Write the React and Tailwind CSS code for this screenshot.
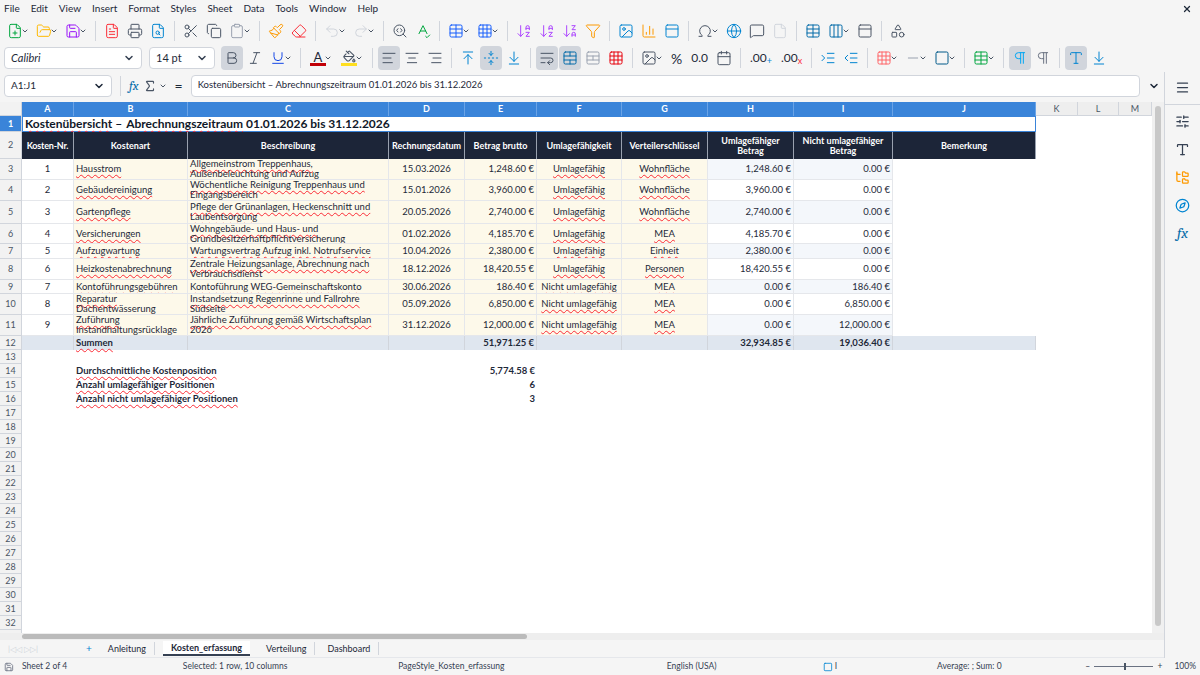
import React from "react";
import {
  FilePlus, FolderOpen, Save, FileText, Printer, FileSearch, Scissors, Copy, Clipboard, Paintbrush, Eraser,
  Undo2, Redo2, SearchCode, SpellCheck, Table, Grid3x3, ArrowDownAZ, ArrowDownZA, Filter, Image, BarChart3,
  Omega, Globe, MessageSquare, File, Columns3, PanelTop, Shapes, ChevronDown, AlignLeft, AlignCenter, AlignRight,
  ArrowUpToLine, FoldVertical, ArrowDownToLine, WrapText, TableCellsMerge, TableCellsSplit, Calendar,
  IndentIncrease, IndentDecrease, Square, Minus, PaintBucket, Pilcrow, Menu, SlidersHorizontal, Type, FolderTree,
  Compass, Sigma, X, Bold, Italic, Underline
} from "lucide-react";

const F = { fontFamily: "Lato, 'Open Sans', sans-serif" };
const cols = [52, 114, 201, 76, 72, 85, 86, 86, 99, 143, 42, 41, 33];
const letters = ["A","B","C","D","E","F","G","H","I","J","K","L","M"];

const rows = [
  ["1","Hausstrom","Allgemeinstrom Treppenhaus, Außenbeleuchtung und Aufzug","15.03.2026","1,248.60 €","Umlagefähig","Wohnfläche","1,248.60 €","0.00 €",21],
  ["2","Gebäudereinigung","Wöchentliche Reinigung Treppenhaus und Eingangsbereich","15.01.2026","3,960.00 €","Umlagefähig","Wohnfläche","3,960.00 €","0.00 €",21],
  ["3","Gartenpflege","Pflege der Grünanlagen, Heckenschnitt und Laubentsorgung","20.05.2026","2,740.00 €","Umlagefähig","Wohnfläche","2,740.00 €","0.00 €",23],
  ["4","Versicherungen","Wohngebäude- und Haus- und Grundbesitzerhaftpflichtversicherung","01.02.2026","4,185.70 €","Umlagefähig","MEA","4,185.70 €","0.00 €",20],
  ["5","Aufzugwartung","Wartungsvertrag Aufzug inkl. Notrufservice","10.04.2026","2,380.00 €","Umlagefähig","Einheit","2,380.00 €","0.00 €",15],
  ["6","Heizkostenabrechnung","Zentrale Heizungsanlage, Abrechnung nach Verbrauchsdienst","18.12.2026","18,420.55 €","Umlagefähig","Personen","18,420.55 €","0.00 €",21],
  ["7","Kontoführungsgebühren","Kontoführung WEG-Gemeinschaftskonto","30.06.2026","186.40 €","Nicht umlagefähig","MEA","0.00 €","186.40 €",14],
  ["8","Reparatur Dachentwässerung","Instandsetzung Regenrinne und Fallrohre Südseite","05.09.2026","6,850.00 €","Nicht umlagefähig","MEA","0.00 €","6,850.00 €",21],
  ["9","Zuführung Instandhaltungsrücklage","Jährliche Zuführung gemäß Wirtschaftsplan 2026","31.12.2026","12,000.00 €","Nicht umlagefähig","MEA","0.00 €","12,000.00 €",21],
];

const sp = "underline decoration-wavy decoration-red-500 decoration-[1px] underline-offset-2";

function Dd() { return <ChevronDown size={8} strokeWidth={3} className="text-gray-600 -ml-0.5" />; }
function I({ c: C, col = "text-gray-600", dd, bg }) {
  return (
    <div className={`flex items-center h-6 px-[3px] rounded ${bg ? "bg-gray-300" : ""}`}>
      <C size={16} strokeWidth={1.5} className={col} />
      {dd && <Dd />}
    </div>
  );
}
function Sep() { return <div className="w-px h-5 bg-gray-300 mx-1" />; }

function RowHead({ n, h, sel }) {
  return (
    <div style={{ height: h }} className={`w-[22px] shrink-0 flex items-center justify-center border-b border-r border-gray-300 text-[9px] ${sel ? "bg-[#3a84d9] text-white font-bold" : "bg-[#f2f2f2] text-gray-600"}`}>{n}</div>
  );
}

function Cell({ w, children, cls = "" }) {
  return <div style={{ width: w }} className={`shrink-0 overflow-hidden border-r border-b border-gray-200 flex items-center text-[9.5px] leading-[10px] text-gray-800 ${cls}`}>{children}</div>;
}

export default function App() {
  const empty = [];
  for (let r = 13; r <= 33; r++) empty.push(r);
  return (
    <div style={F} className="w-[1200px] h-[675px] bg-[#f5f5f5] flex flex-col overflow-hidden text-gray-800">
      <div className="h-[17px] flex items-center text-[10px] px-1 gap-[11px] text-gray-800 relative">
        {["File","Edit","View","Insert","Format","Styles","Sheet","Data","Tools","Window","Help"].map(m => <span key={m}>{m}</span>)}
        <X size={10} className="absolute right-2 top-1" strokeWidth={3} />
      </div>
      <div className="h-[27px] flex items-center px-1 gap-[1px]">
        <I c={FilePlus} col="text-green-600" dd /><I c={FolderOpen} col="text-amber-400" dd /><I c={Save} col="text-purple-600" dd /><Sep />
        <I c={FileText} col="text-red-500" /><I c={Printer} /><I c={FileSearch} col="text-sky-600" /><Sep />
        <I c={Scissors} /><I c={Copy} /><I c={Clipboard} col="text-gray-400" dd /><Sep />
        <I c={Paintbrush} col="text-amber-500" /><I c={Eraser} col="text-red-500" /><Sep />
        <I c={Undo2} col="text-gray-300" dd /><I c={Redo2} col="text-gray-300" dd /><Sep />
        <I c={SearchCode} /><I c={SpellCheck} col="text-green-600" /><Sep />
        <I c={Table} col="text-blue-600" dd /><I c={Grid3x3} col="text-blue-600" dd /><Sep />
        <I c={ArrowDownAZ} col="text-purple-500" /><I c={ArrowDownAZ} col="text-purple-500" /><I c={ArrowDownZA} col="text-purple-500" /><I c={Filter} col="text-amber-500" /><Sep />
        <I c={Image} col="text-sky-600" /><I c={BarChart3} col="text-amber-500" /><I c={PanelTop} col="text-sky-600" /><Sep />
        <I c={Omega} dd /><I c={Globe} col="text-sky-600" /><I c={MessageSquare} /><I c={File} col="text-gray-300" /><Sep />
        <I c={Table} col="text-sky-700" /><I c={Columns3} col="text-sky-700" dd /><I c={PanelTop} /><Sep /><I c={Shapes} />
      </div>
      <div className="h-[28px] flex items-center px-1 gap-[1px]">
        <div className="w-[138px] h-[22px] bg-white border border-gray-300 rounded flex items-center justify-between px-1.5 text-[11px] italic">Calibri<ChevronDown size={12} strokeWidth={3} className="not-italic text-gray-700" /></div>
        <div className="w-[66px] h-[22px] ml-1.5 bg-white border border-gray-300 rounded flex items-center justify-between px-1.5 text-[11px]">14 pt<ChevronDown size={12} strokeWidth={3} className="text-gray-700" /></div>
        <div className="ml-1" /><I c={Bold} bg /><I c={Italic} /><I c={Underline} col="text-blue-700" dd /><Sep />
        <div className="flex items-center px-1"><div className="flex flex-col items-center"><span className="text-[13px] leading-[12px]">A</span><div className="w-4 h-[3px] bg-red-700" /></div><Dd /></div>
        <div className="flex items-center px-1"><div className="flex flex-col items-center"><PaintBucket size={13} className="text-gray-600" /><div className="w-4 h-[3px] bg-yellow-300" /></div><Dd /></div><Sep />
        <I c={AlignLeft} bg /><I c={AlignCenter} /><I c={AlignRight} /><Sep />
        <I c={ArrowUpToLine} col="text-sky-600" /><I c={FoldVertical} col="text-sky-600" bg /><I c={ArrowDownToLine} col="text-sky-600" /><Sep />
        <I c={WrapText} bg /><I c={TableCellsMerge} col="text-sky-700" bg /><I c={TableCellsSplit} col="text-gray-400" /><I c={Grid3x3} col="text-red-600" /><Sep />
        <I c={Image} dd /><span className="text-[14px] px-1">%</span><span className="text-[12px] px-1">0.0</span><I c={Calendar} /><Sep />
        <span className="text-[12px] px-1">.00<sub className="text-sky-600">+</sub></span><span className="text-[12px] px-1">.00<sub className="text-red-500">x</sub></span><Sep />
        <I c={IndentIncrease} col="text-sky-600" /><I c={IndentDecrease} col="text-sky-600" /><Sep />
        <I c={Grid3x3} col="text-red-400" dd /><I c={Minus} col="text-gray-400" dd /><I c={Square} col="text-sky-800" dd /><Sep />
        <I c={Table} col="text-green-600" dd /><Sep />
        <I c={Pilcrow} col="text-sky-500" bg /><I c={Pilcrow} col="text-gray-500" /><Sep /><I c={Type} col="text-sky-600" bg /><I c={ArrowDownToLine} col="text-sky-600" />
      </div>
      <div className="flex flex-1 min-h-0">
        <div className="flex-1 flex flex-col min-w-0">
          <div className="h-[27px] flex items-center px-1 gap-1">
            <div className="w-[108px] h-[22px] bg-white border border-gray-300 rounded flex items-center justify-between px-1.5 text-[10px]">A1:J1<ChevronDown size={12} strokeWidth={3} /></div>
            <div className="w-px h-5 bg-gray-300 mx-1" />
            <span className="italic text-sky-700 text-[13px] font-serif">fx</span>
            <Sigma size={14} className="text-gray-600" /><Dd /><span className="text-[14px] px-1">=</span>
            <div className="flex-1 h-[22px] bg-white border border-gray-300 rounded flex items-center px-1.5 text-[9.5px]">Kostenübersicht – Abrechnungszeitraum 01.01.2026 bis 31.12.2026</div>
            <ChevronDown size={12} strokeWidth={3} className="ml-1" />
          </div>
          <div className="flex flex-1 min-h-0 mt-[3px]">
            <div className="flex-1 flex flex-col bg-white overflow-hidden">
              <div className="flex h-[14px] shrink-0">
                <div className="w-[22px] bg-[#f2f2f2] border-r border-b border-gray-300" />
                {cols.map((w, i) => (
                  <div key={i} style={{ width: w }} className={`shrink-0 flex items-center justify-center text-[9px] border-r ${i < 10 ? "bg-[#3a84d9] text-white font-bold border-[#6aa3e6]" : "bg-[#eeeeee] text-gray-600 border-gray-300 border-b"}`}>{letters[i]}</div>
                ))}
              </div>
              <div className="flex h-[16px] shrink-0">
                <RowHead n="1" h={16} sel />
                <div style={{ width: 1014 }} className="shrink-0 border border-[#3a84d9] text-[12px] font-bold flex items-center px-0.5 text-gray-900"><span className={sp}>Kostenübersicht</span>&nbsp;– <span className={`${sp} ml-1`}>Abrechnungszeitraum</span>&nbsp;01.01.2026 bis 31.12.2026</div>
              </div>
              <div className="flex h-[27px] shrink-0">
                <RowHead n="2" h={27} />
                {["Kosten-Nr.","Kostenart","Beschreibung","Rechnungsdatum","Betrag brutto","Umlagefähigkeit","Verteilerschlüssel","Umlagefähiger Betrag","Nicht umlagefähiger Betrag","Bemerkung"].map((t, i) => (
                  <div key={i} style={{ width: cols[i] }} className={`shrink-0 bg-[#1c2538] text-white font-bold text-[9px] leading-[10px] text-center flex items-center justify-center border-r border-gray-400 ${i === 0 ? "whitespace-nowrap tracking-[-0.2px]" : "px-1"}`}>{t}</div>
                ))}
              </div>
              {rows.map((r, k) => {
                const h = r[9];
                const alt = k % 2 === 0 ? "bg-[#f4f7fb]" : "bg-white";
                return (
                  <div key={k} className="flex shrink-0" style={{ height: h }}>
                    <RowHead n={k + 3} h={h} />
                    <Cell w={cols[0]} cls="justify-center bg-white">{r[0]}</Cell>
                    <Cell w={cols[1]} cls="bg-[#fdf9ea] px-0.5"><span className={sp}>{r[1]}</span></Cell>
                    <Cell w={cols[2]} cls="bg-[#fdf9ea] px-0.5"><span className={sp}>{r[2]}</span></Cell>
                    <Cell w={cols[3]} cls="bg-[#fdf9ea] justify-center">{r[3]}</Cell>
                    <Cell w={cols[4]} cls="bg-[#fdf9ea] justify-end px-0.5">{r[4]}</Cell>
                    <Cell w={cols[5]} cls="bg-[#fdf9ea] justify-center whitespace-nowrap"><span className={sp}>{r[5]}</span></Cell>
                    <Cell w={cols[6]} cls="bg-[#fdf9ea] justify-center"><span className={sp}>{r[6]}</span></Cell>
                    <Cell w={cols[7]} cls={`${alt} justify-end px-0.5`}>{r[7]}</Cell>
                    <Cell w={cols[8]} cls={`${alt} justify-end px-0.5`}>{r[8]}</Cell>
                    <div style={{ width: cols[9] }} />
                  </div>
                );
              })}
              <div className="flex h-[14px] shrink-0">
                <RowHead n="12" h={14} />
                <div className="flex bg-[#dfe6ef] font-bold text-[9.5px]">
                  {cols.slice(0, 10).map((w, i) => (
                    <div key={i} style={{ width: w }} className="shrink-0 border-r border-gray-300 flex items-center justify-end px-0.5">
                      {i === 1 && <span className={`${sp} mr-auto`}>Summen</span>}
                      {i === 4 && "51,971.25 €"}{i === 7 && "32,934.85 €"}{i === 8 && "19,036.40 €"}
                    </div>
                  ))}
                </div>
              </div>
              {empty.map(n => {
                const lab = { 14: ["Durchschnittliche Kostenposition", "5,774.58 €"], 15: ["Anzahl umlagefähiger Positionen", "6"], 16: ["Anzahl nicht umlagefähiger Positionen", "3"] }[n];
                return (
                  <div key={n} className="flex h-[14px] shrink-0">
                    <RowHead n={n} h={14} />
                    {lab && <>
                      <div style={{ width: 52 }} />
                      <div style={{ width: 391 }} className="text-[9.5px] font-bold flex items-center px-0.5 whitespace-nowrap"><span className={sp}>{lab[0]}</span></div>
                      <div style={{ width: 72 }} className="text-[9.5px] font-bold flex items-center justify-end px-0.5">{lab[1]}</div>
                    </>}
                  </div>
                );
              })}
            </div>
            <div className="w-[12px] bg-[#f0f0f0] flex justify-center pt-1">
              <div className="w-[6px] h-[520px] bg-[#c8c8c8] rounded" />
            </div>
          </div>
          <div className="h-[7px] bg-[#eee] flex items-center px-[22px] shrink-0">
            <div className="w-[505px] h-[5px] bg-[#bbb] rounded" />
          </div>
          <div className="h-[18px] flex items-center text-[9px] shrink-0 pl-2 gap-2 border-b border-gray-200">
            <span className="text-gray-300 text-[8px] whitespace-nowrap w-[62px]">|◁◁ ▷▷|</span>
            <span className="text-sky-600 text-[10px] ml-2">+</span>
            <span className="px-2 border-r border-gray-300">Anleitung</span>
            <span className="px-2 font-bold bg-white border-b-2 border-gray-700">Kosten_erfassung</span>
            <span className="px-2 border-r border-gray-300">Verteilung</span>
            <span className="px-1 border-r border-gray-300 pr-2">Dashboard</span>
          </div>
        </div>
        <div className="w-[36px] border-l border-gray-300 flex flex-col items-center gap-[13px] pt-2">
          <Menu size={15} className="text-gray-700" />
          <div className="w-full h-px bg-gray-300 -my-1" />
          <SlidersHorizontal size={15} className="text-gray-700" />
          <Type size={15} className="text-gray-700" />
          <FolderTree size={15} className="text-amber-500" />
          <Compass size={15} className="text-sky-600" />
          <span className="italic text-sky-700 text-[15px] font-serif leading-[15px]">fx</span>
        </div>
      </div>
      <div className="h-[17px] flex items-center text-[8.5px] text-gray-700 shrink-0 px-1">
        <Save size={10} className="text-gray-500" />
        <span className="ml-2 w-[163px]">Sheet 2 of 4</span>
        <span className="w-[218px]">Selected: 1 row, 10 columns</span>
        <span className="w-[272px]">PageStyle_Kosten_erfassung</span>
        <span className="w-[158px]">English (USA)</span>
        <Square size={10} className="text-sky-600" /><span className="ml-0.5">I</span>
        <span className="ml-[100px] w-[150px]">Average: ; Sum: 0</span>
        <span>–</span><div className="w-[60px] h-px bg-gray-500 mx-1 relative"><div className="absolute left-[30px] -top-[3px] w-[2px] h-[7px] bg-gray-600" /></div><span>+</span>
        <span className="ml-3">100%</span>
      </div>
    </div>
  );
}
